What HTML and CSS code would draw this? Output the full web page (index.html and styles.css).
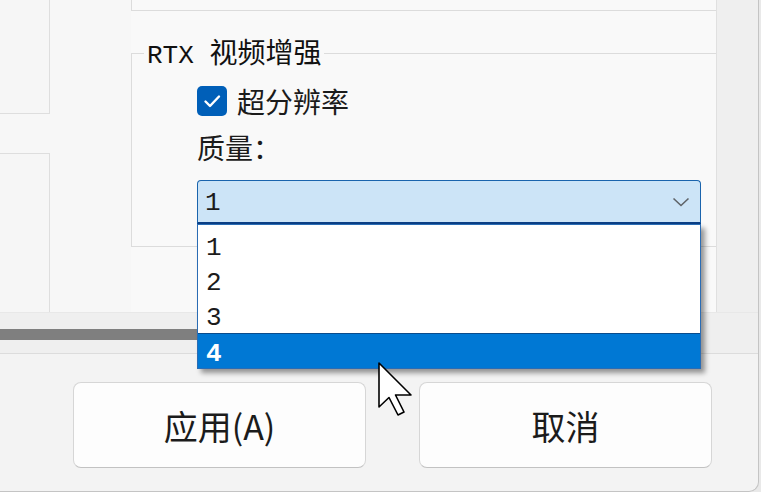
FILE: index.html
```html
<!DOCTYPE html>
<html lang="zh-CN">

<head>
    <meta charset="UTF-8">
    <meta name="viewport" content="width=device-width, initial-scale=1.0">
    <title>RTX 视频增强</title>
    <link rel="stylesheet" href="styles.css">
</head>

<body>
    <div class="window">
        <div class="upper">
            <div class="side">
                <div class="side-panel side-top"></div>
                <div class="side-panel side-bottom"></div>
            </div>
            <div class="main">
                <div class="top-box"></div>
                <fieldset class="group">
                    <legend><span class="mono">RTX&nbsp;</span>视频增强</legend>
                    <div class="group-body">
                        <label class="check-row">
                            <span class="checkbox">
                                <svg viewBox="0 0 30 30" width="30" height="30">
                                    <path d="M8.5 15.5 L13 20 L22 10.5" fill="none" stroke="#ffffff" stroke-width="2.4" stroke-linecap="round" stroke-linejoin="round"/>
                                </svg>
                            </span>
                            超分辨率
                        </label>
                        <div class="field-label">质量：</div>
                        <div class="combo">
                            <span class="combo-value">1</span>
                            <svg class="chevron" viewBox="0 0 18 10" width="18" height="10">
                                <path d="M1.5 1.5 L9 8.5 L16.5 1.5" fill="none" stroke="#5f6368" stroke-width="1.6"/>
                            </svg>
                            <!-- open dropdown list -->
                            <ul class="combo-list">
                                <li>1</li>
                                <li>2</li>
                                <li>3</li>
                                <li class="selected">4</li>
                            </ul>
                        </div>
                    </div>
                </fieldset>
            </div>
            <div class="filler"></div>
        </div>
        <div class="hscroll">
            <div class="thumb"></div>
        </div>
        <div class="buttons">
            <button class="btn">应用(A)</button>
            <button class="btn">取消</button>
        </div>
        <svg class="cursor" viewBox="0 0 40 58" width="40" height="58">
            <path d="M2 2 L2 46 L12 36.5 L21 54 L27 51 L18.5 34 L34 34 Z" fill="#ffffff" stroke="#000000" stroke-width="1.6" stroke-linejoin="round"/>
        </svg>
    </div>
</body>

</html>
```

FILE: styles.css
```css
* {
    box-sizing: border-box;
    margin: 0;
    padding: 0;
}

body {
    font-family: "Noto Sans CJK SC", "Noto Sans", sans-serif;
    background-color: #e9e9e9;
    width: 761px;
    height: 492px;
    overflow: hidden;
    color: #1b1b1b;
}

.window {
    position: relative;
    width: 759px;
    height: 492px;
    background-color: #f3f3f3;
    border-right: 1px solid #c4c4c4;
    border-bottom: 1px solid #c4c4c4;
    border-bottom-right-radius: 10px;
    display: flex;
    flex-direction: column;
}

/* upper panel area */
.upper {
    display: flex;
    height: 312px;
    background-color: #f7f7f7;
}

.side {
    width: 50px;
    display: flex;
    flex-direction: column;
}

.side-panel {
    border-right: 1px solid #dedede;
    background-color: #f6f6f6;
}

.side-top {
    height: 114px;
    border-bottom: 1px solid #dedede;
}

.side-bottom {
    flex: 1;
    margin-top: 39px;
    border-top: 1px solid #dedede;
}

.main {
    width: 586px;
    margin-left: 81px;
    border-right: 1px solid #e0e0e0;
    background-color: #f9f9f9;
    display: flex;
    flex-direction: column;
}

.filler {
    flex: 1;
    background-color: #efefef;
}

.top-box {
    height: 11px;
    border-left: 1px solid #dcdcdc;
    border-bottom: 1px solid #dcdcdc;
}

.group {
    margin-top: 24px;
    border: 1px solid #dcdcdc;
    border-right: none;
    padding: 13px 15px 22px 0;
}

.group legend {
    margin-left: 12px;
    padding: 0 3px;
    font-size: 28px;
    line-height: 32px;
    color: #111;
}

.mono {
    font-family: "Liberation Mono", monospace;
    font-size: 26px;
}

.group-body {
    padding-left: 65px;
}

.check-row {
    display: flex;
    align-items: center;
    gap: 10px;
    height: 32px;
    font-size: 28px;
}

.checkbox {
    width: 30px;
    height: 30px;
    border-radius: 5px;
    background-color: #005fb8;
    display: flex;
}

.field-label {
    margin-top: 14px;
    font-size: 28px;
    line-height: 32px;
}

.combo {
    position: relative;
    margin-top: 17px;
    height: 44px;
    background-color: #cce4f7;
    border: 1px solid #1a64ad;
    border-bottom: 2px solid #0b3f86;
    border-radius: 4px 4px 0 0;
    display: flex;
    align-items: center;
    justify-content: space-between;
    padding: 0 10px 0 7px;
}

.combo-value {
    font-family: "Liberation Mono", monospace;
    font-size: 26px;
    line-height: 1;
    padding-top: 3px;
}

.combo-list {
    position: absolute;
    top: calc(100% + 2px);
    left: -1px;
    right: -1px;
    list-style: none;
    background-color: #ffffff;
    border: 1px solid #2a6cb4;
    padding-top: 3px;
    box-shadow: 4px 4px 5px rgba(0, 0, 0, 0.4);
    z-index: 5;
}

.combo-list li {
    height: 35px;
    line-height: 40px;
    padding-left: 8px;
    font-family: "Liberation Mono", monospace;
    font-size: 26px;
    color: #1b1b1b;
}

.combo-list li.selected {
    background-color: #0078d4;
    color: #ffffff;
    font-weight: bold;
    border-top: 1px solid #0a4c8c;
}

/* horizontal scroll strip */
.hscroll {
    height: 42px;
    background-color: #efefef;
    border-top: 1px solid #e8e8e8;
    border-bottom: 1px solid #dcdcdc;
    padding-top: 16px;
}

.thumb {
    width: 420px;
    height: 11px;
    background-color: #7f7f7f;
}

/* dialog buttons */
.buttons {
    display: flex;
    gap: 53px;
    padding: 28px 0 0 73px;
}

.btn {
    width: 293px;
    height: 86px;
    background-color: #fdfdfd;
    border: 1px solid #d6d6d6;
    border-bottom-color: #c2c2c2;
    border-radius: 8px;
    font-family: "Noto Sans CJK SC", "Noto Sans", sans-serif;
    font-size: 34px;
    color: #1b1b1b;
    cursor: pointer;
}

.cursor {
    position: absolute;
    left: 377px;
    top: 361px;
    z-index: 10;
}
```
